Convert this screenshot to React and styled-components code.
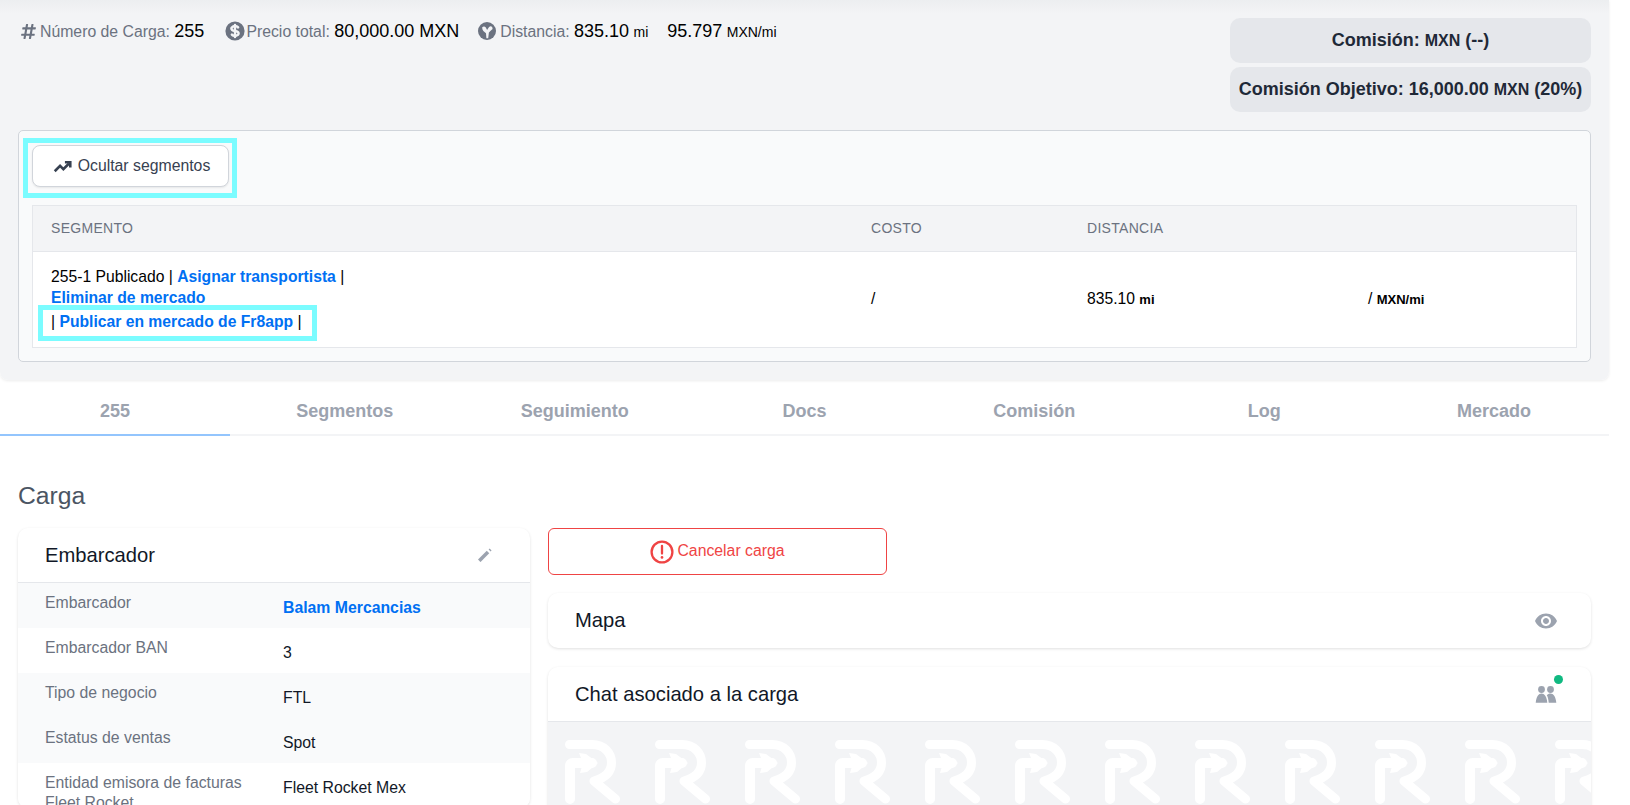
import React from "react";
import styled, { createGlobalStyle } from "styled-components";
import { FaHashtag } from "react-icons/fa";
import { HiCurrencyDollar } from "react-icons/hi";
import { MdVisibility } from "react-icons/md";

const GlobalStyle = createGlobalStyle`
  html, body { margin: 0; padding: 0; height: 805px; overflow: hidden; background: #fff; }
  body { font-family: "Liberation Sans", Arial, sans-serif; color: #111827; }
  * { box-sizing: border-box; }
`;

const Page = styled.div`
  width: 1609px;
`;

const TopPanel = styled.section`
  height: 380px;
  padding: 18px 18px 0 18px;
  background: linear-gradient(#eceef0, #f3f4f6 14px);
  border-radius: 0 0 8px 8px;
  box-shadow: 0 1px 3px rgba(0, 0, 0, 0.08);
`;

const SummaryRow = styled.div`
  display: flex;
  justify-content: space-between;
  align-items: flex-start;
`;

const Stats = styled.div`
  display: flex;
  gap: 19px;
  padding: 3px 0 0 2px;
`;

const Stat = styled.div`
  display: flex;
  align-items: center;
  height: 20px;
  font-size: 15.8px;
  color: #6b7280;
  white-space: pre;
  svg { color: #6b7280; flex: none; }
`;

const StatText = styled.span`
  margin-left: ${(p) => p.$gap || 0}px;
`;

const Value = styled.span`
  font-size: 18px;
  color: #000;
`;

const Unit = styled.span`
  font-size: 14px;
  color: #000;
`;

const CommissionColumn = styled.div`
  display: flex;
  flex-direction: column;
  gap: 4px;
  width: 361px;
`;

const CommissionBox = styled.div`
  height: 45px;
  display: flex;
  align-items: center;
  justify-content: center;
  white-space: pre;
  background: #e5e7eb;
  border-radius: 10px;
  font-size: 18px;
  font-weight: 700;
  color: #1f2937;
  small { font-size: 16px; }
`;

const SegmentsBox = styled.div`
  margin-top: 18px;
  height: 232px;
  padding: 14px 13px 0 13px;
  background: #f9fafb;
  border: 1px solid #d1d5db;
  border-radius: 5px;
`;

const Marked = styled.div`
  position: relative;
  display: inline-block;
  margin-top: ${(p) => p.$pushed || 0}px;
`;

const Highlight = styled.span`
  position: absolute;
  top: ${(p) => p.$top}px;
  left: ${(p) => p.$left}px;
  right: ${(p) => p.$right}px;
  bottom: ${(p) => p.$bottom}px;
  border: 5px solid #7bfcff;
  pointer-events: none;
`;

const ToggleButton = styled.button`
  display: flex;
  align-items: center;
  justify-content: center;
  gap: 6px;
  width: 197px;
  height: 42px;
  padding: 0 0 0 2px;
  background: #fff;
  border: 1px solid #d1d5db;
  border-radius: 8px;
  box-shadow: 0 1px 2px rgba(0, 0, 0, 0.08);
  font: 15.8px "Liberation Sans", Arial, sans-serif;
  color: #374151;
`;

const Table = styled.div`
  margin-top: 18px;
  border: 1px solid #e5e7eb;
  background: #fff;
`;

const Row = styled.div`
  display: grid;
  grid-template-columns: 820px 216px 281px 1fr;
  align-items: center;
`;

const HeadRow = styled(Row)`
  height: 46px;
  padding-bottom: 2px;
  background: #f3f4f6;
  border-bottom: 1px solid #e5e7eb;
`;

const HeadCell = styled.div`
  padding-left: 18px;
  font-size: 14px;
  letter-spacing: 0.3px;
  color: #6b7280;
  text-transform: uppercase;
`;

const BodyRow = styled(Row)`
  height: 95px;
  color: #000;
  font-size: 15.7px;
`;

const BodyCell = styled.div`
  padding: 0 0 ${(p) => (p.$lifted ? 2 : 0)}px 18px;
  b { font-size: 13px; }
`;

const SegmentLine = styled.div`
  line-height: ${(p) => p.$height || 21}px;
  white-space: pre;
`;

const Link = styled.a`
  color: #0070f3;
  font-weight: 700;
`;

const Tabs = styled.nav`
  display: grid;
  grid-template-columns: repeat(7, 1fr);
`;

const Tab = styled.div`
  height: 56px;
  padding-top: 21px;
  text-align: center;
  font-size: 18px;
  font-weight: 700;
  color: #9ca3af;
  border-bottom: 2px solid ${(p) => (p.$active ? "#93c5fd" : "#f3f4f6")};
`;

const Content = styled.main`
  padding: 0 18px;
`;

const SectionTitle = styled.h2`
  margin: 46px 0 18px;
  font-size: 24.7px;
  line-height: 28px;
  font-weight: 400;
  color: #4b5563;
`;

const Columns = styled.div`
  display: grid;
  grid-template-columns: 512px minmax(0, 1fr);
  gap: 18px;
  align-items: start;
`;

const Card = styled.div`
  margin-top: ${(p) => p.$pushed || 0}px;
  background: #fff;
  border-radius: 10px;
  box-shadow: 0 1px 3px rgba(0, 0, 0, 0.12);
  overflow: hidden;
`;

const CardHeader = styled.div`
  display: flex;
  align-items: center;
  justify-content: space-between;
  height: 55px;
  padding: 0 33px 0 27px;
  font-size: 20.2px;
  color: #111827;
  border-bottom: ${(p) => (p.$line ? "1px solid #e5e7eb" : "none")};
`;

const IconSlot = styled.div`
  position: relative;
  display: flex;
  align-items: center;
  justify-content: center;
  width: 24px;
  height: 24px;
  color: #9ca3af;
`;

const InfoRow = styled.div`
  display: grid;
  grid-template-columns: 238px 1fr;
  height: 45px;
  padding: 10px 27px 0;
  font-size: 15.8px;
  line-height: 20px;
  background: ${(p) => (p.$shaded ? "#f9fafb" : "#fff")};
`;

const InfoLabel = styled.div`
  color: #6b7280;
`;

const InfoValue = styled.div`
  padding-top: 5px;
  color: #111827;
`;

const RightColumn = styled.div`
  display: flex;
  flex-direction: column;
  gap: 18px;
  min-width: 0;
`;

const CancelButton = styled.button`
  display: flex;
  align-items: center;
  justify-content: center;
  gap: 3px;
  width: 339px;
  height: 47px;
  background: #fff;
  border: 1px solid #ef4444;
  border-radius: 6px;
  font: 15.8px "Liberation Sans", Arial, sans-serif;
  color: #ef4444;
  span { padding-bottom: 2px; }
`;

const OnlineDot = styled.span`
  position: absolute;
  top: -7px;
  left: 20px;
  width: 9px;
  height: 9px;
  border-radius: 50%;
  background: #10b981;
`;

const ChatWall = styled.div`
  display: flex;
  gap: 35px;
  height: 100px;
  padding: 18px 0 0 17px;
  background: #f3f4f6;
  overflow: hidden;
  svg { flex: none; }
`;

const GlobeIcon = () => (
  <svg width="18" height="18" viewBox="0 0 18 18">
    <circle cx="9" cy="9" r="9" fill="#6b7280" />
    <path
      d="M4.2 5.2 Q6.3 3.8 7.8 5.6 L9.1 8 L10.9 5.2 Q12.5 3.6 14.2 5 L14.6 7 Q12.5 8.5 10.9 10.5 L10.2 16.2 L8.4 16.2 L8 11.2 Q5 9.6 4.4 7.2 Z"
      fill="#f3f4f6"
    />
  </svg>
);

const TrendIcon = () => (
  <svg width="19" height="19" viewBox="0 0 22 22" fill="none" stroke="#374151" strokeWidth="3">
    <path d="M2 16.5 L8.2 10.3 L12 14 L18.5 7.5" />
    <path d="M13.8 6 H20 V12.2" />
  </svg>
);

const PencilIcon = () => (
  <svg width="14" height="14" viewBox="0 0 14 14" fill="none" stroke="currentColor">
    <path d="M1.2 12.8 L10 4" strokeWidth="3.6" />
    <path d="M11.6 2.4 L12.6 1.4" strokeWidth="2.8" />
  </svg>
);

const AlertIcon = () => (
  <svg width="24" height="24" viewBox="0 0 24 24" fill="none" stroke="currentColor" strokeWidth="2.3">
    <circle cx="12" cy="12" r="10.4" />
    <path d="M12 6 V13.5" strokeLinecap="round" />
    <path d="M12 17.3 V17.5" strokeLinecap="round" strokeWidth="2.7" />
  </svg>
);

const PeopleIcon = () => (
  <svg width="24" height="24" viewBox="0 0 24 24" fill="currentColor">
    <circle cx="7.5" cy="7.5" r="3.4" />
    <circle cx="16.5" cy="7.5" r="3.4" />
    <path d="M1.7 20.7 C2.2 14.5 4.8 11.5 7.5 11.5 C10.2 11.5 12.8 14.5 13.3 20.7 Z" />
    <path d="M14.7 20.7 C14.4 17 13.8 15 12.8 13.3 C13.8 12 15 11.5 16.5 11.5 C19.2 11.5 21.8 14.5 22.3 20.7 Z" />
  </svg>
);

const RLogo = () => (
  <svg width="55" height="64" viewBox="0 0 55 64" fill="none">
    <g stroke="#fff" strokeLinecap="round" strokeLinejoin="round">
      <path d="M4.5 4.5 H27 C39 4.5 46.5 13 46.5 22.5 C46.5 32 40 38 29 41 L50.5 59" strokeWidth="9" />
      <path d="M5 59 V26 Q5 23 8 23 H27" strokeWidth="10" />
    </g>
    <path d="M14 13 L21 14 L33 23 L22 32 L15 33 L18 23 Z" fill="#fff" />
  </svg>
);

const tabNames = ["255", "Segmentos", "Seguimiento", "Docs", "Comisión", "Log", "Mercado"];

export default function App() {
  return (
    <Page>
      <GlobalStyle />
      <TopPanel>
        <SummaryRow>
          <Stats>
            <Stat>
              <FaHashtag size={17} />
              <StatText $gap={3}>
                Número de Carga: <Value>255</Value>
              </StatText>
            </Stat>
            <Stat>
              <HiCurrencyDollar size={24} />
              <StatText $gap={-1}>
                Precio total: <Value>80,000.00 MXN</Value>
              </StatText>
            </Stat>
            <Stat>
              <GlobeIcon />
              <StatText $gap={4}>
                Distancia: <Value>835.10</Value> <Unit>mi</Unit>
              </StatText>
            </Stat>
            <Stat>
              <StatText>
                <Value>95.797</Value> <Unit>MXN/mi</Unit>
              </StatText>
            </Stat>
          </Stats>
          <CommissionColumn>
            <CommissionBox>
              Comisión: <small>MXN</small> (--)
            </CommissionBox>
            <CommissionBox>
              Comisión Objetivo: 16,000.00 <small>MXN</small> (20%)
            </CommissionBox>
          </CommissionColumn>
        </SummaryRow>

        <SegmentsBox>
          <Marked>
            <ToggleButton>
              <TrendIcon />
              Ocultar segmentos
            </ToggleButton>
            <Highlight $top={-7} $left={-9} $right={-8} $bottom={-11} />
          </Marked>
          <Table>
            <HeadRow>
              <HeadCell>Segmento</HeadCell>
              <HeadCell>Costo</HeadCell>
              <HeadCell>Distancia</HeadCell>
              <HeadCell />
            </HeadRow>
            <BodyRow>
              <BodyCell>
                <SegmentLine>
                  255-1 Publicado | <Link>Asignar transportista</Link> |
                </SegmentLine>
                <SegmentLine>
                  <Link>Eliminar de mercado</Link>
                </SegmentLine>
                <Marked $pushed={2}>
                  <SegmentLine $height={24}>
                    | <Link>Publicar en mercado de Fr8app</Link> |
                  </SegmentLine>
                  <Highlight $top={-5} $left={-13} $right={-15} $bottom={-7} />
                </Marked>
              </BodyCell>
              <BodyCell $lifted>/</BodyCell>
              <BodyCell $lifted>
                835.10 <b>mi</b>
              </BodyCell>
              <BodyCell $lifted>
                / <b>MXN/mi</b>
              </BodyCell>
            </BodyRow>
          </Table>
        </SegmentsBox>
      </TopPanel>

      <Tabs>
        {tabNames.map((name, i) => (
          <Tab key={name} $active={i === 0}>
            {name}
          </Tab>
        ))}
      </Tabs>

      <Content>
        <SectionTitle>Carga</SectionTitle>
        <Columns>
          <Card>
            <CardHeader $line>
              Embarcador
              <IconSlot>
                <PencilIcon />
              </IconSlot>
            </CardHeader>
            <InfoRow $shaded>
              <InfoLabel>Embarcador</InfoLabel>
              <InfoValue>
                <Link>Balam Mercancias</Link>
              </InfoValue>
            </InfoRow>
            <InfoRow>
              <InfoLabel>Embarcador BAN</InfoLabel>
              <InfoValue>3</InfoValue>
            </InfoRow>
            <InfoRow $shaded>
              <InfoLabel>Tipo de negocio</InfoLabel>
              <InfoValue>FTL</InfoValue>
            </InfoRow>
            <InfoRow $shaded>
              <InfoLabel>Estatus de ventas</InfoLabel>
              <InfoValue>Spot</InfoValue>
            </InfoRow>
            <InfoRow>
              <InfoLabel>
                Entidad emisora de facturas
                <br />
                Fleet Rocket
              </InfoLabel>
              <InfoValue>Fleet Rocket Mex</InfoValue>
            </InfoRow>
          </Card>

          <RightColumn>
            <CancelButton>
              <AlertIcon />
              <span>Cancelar carga</span>
            </CancelButton>
            <Card>
              <CardHeader>
                Mapa
                <IconSlot>
                  <MdVisibility size={24} />
                </IconSlot>
              </CardHeader>
            </Card>
            <Card $pushed={1}>
              <CardHeader $line>
                Chat asociado a la carga
                <IconSlot>
                  <PeopleIcon />
                  <OnlineDot />
                </IconSlot>
              </CardHeader>
              <ChatWall>
                {Array.from({ length: 12 }, (_, i) => (
                  <RLogo key={i} />
                ))}
              </ChatWall>
            </Card>
          </RightColumn>
        </Columns>
      </Content>
    </Page>
  );
}
